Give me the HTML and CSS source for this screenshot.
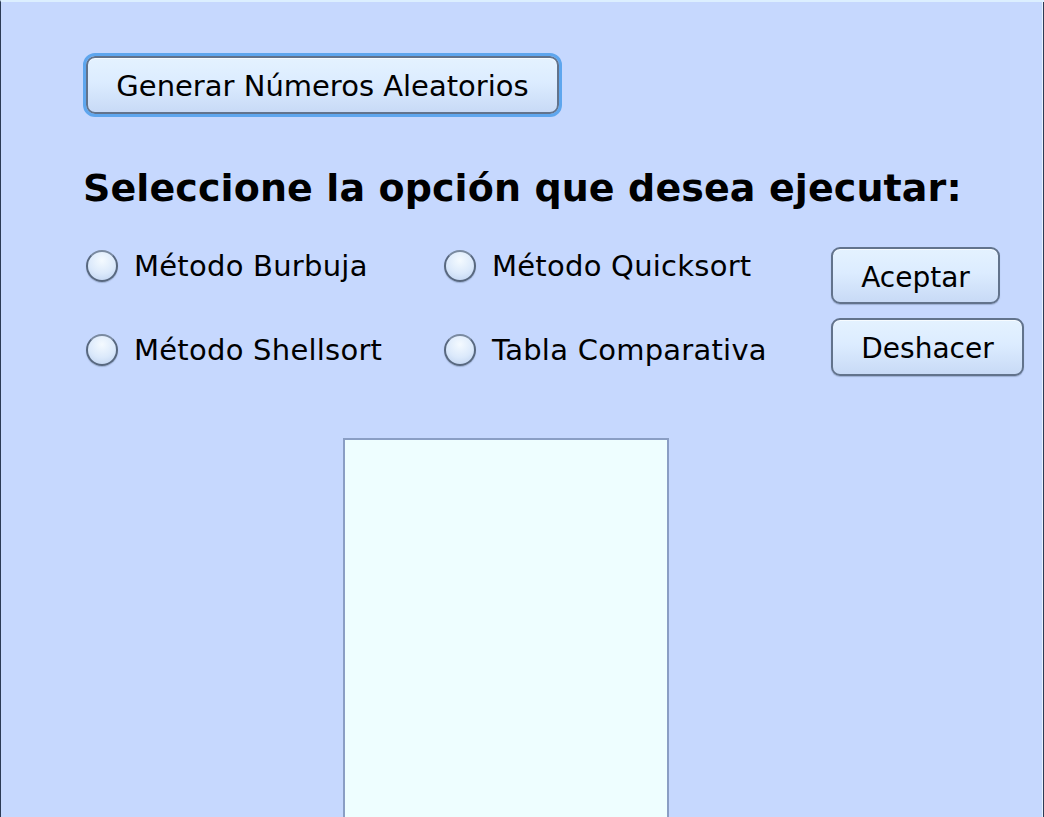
FILE: index.html
```html
<!DOCTYPE html>
<html lang="es">
<head>
<meta charset="utf-8">
<title>Ordenamiento</title>
<link rel="stylesheet" href="styles.css">
</head>
<body>
<div class="frame">
  <div class="content">
    <button class="btn btn-focus btn-generate">Generar Números Aleatorios</button>
    <h1 class="title">Seleccione la opción que desea ejecutar:</h1>
    <div class="options">
      <div class="radios">
        <label class="radio"><span class="dot"></span><span class="lbl">Método Burbuja</span></label>
        <label class="radio"><span class="dot"></span><span class="lbl">Método Quicksort</span></label>
        <label class="radio"><span class="dot"></span><span class="lbl">Método Shellsort</span></label>
        <label class="radio"><span class="dot"></span><span class="lbl">Tabla Comparativa</span></label>
      </div>
      <div class="actions">
        <button class="btn btn-accept">Aceptar</button>
        <button class="btn btn-undo">Deshacer</button>
      </div>
    </div>
    <div class="output"></div>
  </div>
</div>
</body>
</html>
```

FILE: styles.css
```css
* { box-sizing: border-box; }
html, body { margin: 0; padding: 0; }
body {
  width: 1044px;
  height: 817px;
  overflow: hidden;
  font-family: "DejaVu Sans", Verdana, sans-serif;
  color: #000;
}
.frame {
  width: 1044px;
  height: 817px;
  background: #c6d8fe;
  border-left: 1px solid #2c3b55;
  border-top: 2px solid #dcefff;
  box-shadow: inset -1px 0 0 #2c3b55, inset -2px 0 0 #e6f2ff;
  overflow: hidden;
}
.content {
  padding: 51px 0 0 85px;
  display: flex;
  flex-direction: column;
  align-items: flex-start;
}
.btn {
  font-family: "DejaVu Sans", Verdana, sans-serif;
  color: #000;
  background: linear-gradient(#e4f2ff 0%, #dcecff 45%, #c8daf6 100%);
  border: 2px solid #62738c;
  border-radius: 9px;
  padding: 0;
  margin: 0;
  display: flex;
  align-items: center;
  justify-content: center;
  box-shadow: inset 0 1px 0 #f6fbff, 0 1px 1px rgba(60, 80, 110, 0.3);
}
.btn-focus {
  outline: 3px solid #5ea6ee;
  outline-offset: 0;
}
.btn-generate {
  width: 473px;
  height: 58px;
  font-size: 29px;
  padding-top: 1px;
  margin-top: 3px;
}
.title {
  margin: 47px 0 0 -3px;
  font-size: 38px;
  font-weight: bold;
  line-height: 54px;
  letter-spacing: 0.1px;
}
.options {
  display: flex;
  align-items: flex-start;
  margin-top: 33px;
}
.radios {
  display: grid;
  grid-template-columns: 358px 387px;
  grid-auto-rows: 84px;
}
.radio {
  display: flex;
  align-items: center;
  height: 36px;
  gap: 16px;
  font-size: 29px;
  letter-spacing: 0.25px;
}
.dot {
  width: 32px;
  height: 32px;
  border-radius: 50%;
  border: 2px solid #58687f;
  border-top-color: #7a8aa0;
  background: radial-gradient(circle at 50% 30%, #f4faff 0%, #dbe9fb 55%, #bcd0ef 100%);
  box-shadow: 0 1px 1px rgba(80, 100, 130, 0.35);
  flex: none;
}
.actions {
  display: flex;
  flex-direction: column;
  align-items: flex-start;
  gap: 14px;
  margin-top: -1px;
}
.btn-accept {
  width: 169px;
  height: 57px;
  font-size: 28px;
  padding-top: 3px;
}
.btn-undo {
  width: 193px;
  height: 58px;
  font-size: 28px;
  padding-top: 2px;
}
.output {
  margin: 22px 0 0 257px;
  width: 326px;
  height: 400px;
  background: #eefeff;
  border: 2px solid #8a9ec4;
  border-bottom: none;
}
```
